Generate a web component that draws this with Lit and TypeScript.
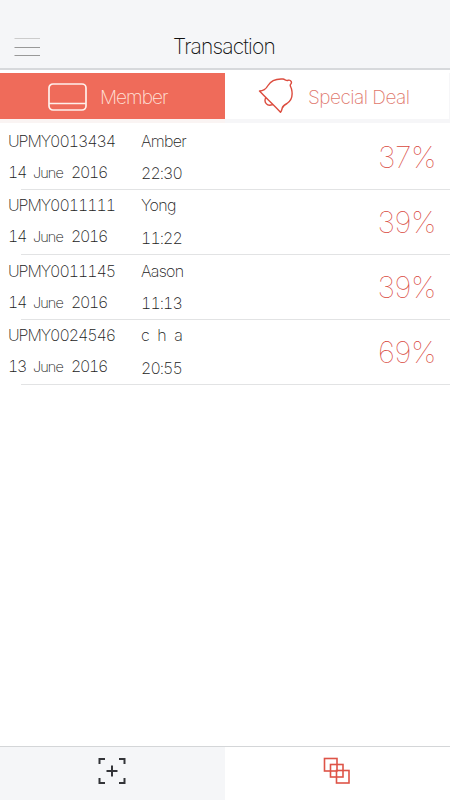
import { LitElement, html, css } from "lit";
import { customElement } from "lit/decorators.js";
import { classMap } from "lit/directives/class-map.js";

interface Deal { id: string; name: string; day: string; time: string; pct: string; spaced?: boolean; }

const deals: Deal[] = [
  { id: "UPMY0013434", name: "Amber", day: "14", time: "22:30", pct: "37%" },
  { id: "UPMY0011111", name: "Yong", day: "14", time: "11:22", pct: "39%" },
  { id: "UPMY0011145", name: "Aason", day: "14", time: "11:13", pct: "39%" },
  { id: "UPMY0024546", name: "cha", day: "13", time: "20:55", pct: "69%", spaced: true },
];

@customElement("app-root")
export class AppRoot extends LitElement {
  static styles = css`
    :host { display: flex; flex-direction: column; width: 450px; height: 800px; background: #fff; overflow: hidden;
      font-family: Inter, "Liberation Sans", sans-serif; font-weight: 200; color: #222; box-sizing: border-box; }
    * { box-sizing: border-box; }
    svg { display: block; fill: none; flex: none; }
    header { height: 70px; flex: none; background: #f5f6f8; border-bottom: 2px solid #d7d9dc; display: grid;
      grid-template-columns: 1fr auto 1fr; padding: 25px 16px 0 14px; align-items: center; }
    h1 { margin: 0; padding-top: 1px; font-size: 21px; line-height: 24px; font-weight: 200; letter-spacing: -0.85px; color: #111; }
    .tabs { display: grid; grid-template-columns: 1fr 1fr; height: 49px; flex: none; padding-top: 3px; }
    .tab { display: flex; align-items: center; font-size: 19px; padding-top: 1px; color: #e0776c; letter-spacing: -0.52px; white-space: nowrap; }
    .tab.on { background: #ef6b5a; color: #ffe3dc; padding-left: 48px; gap: 13px; letter-spacing: -0.95px; }
    .tab span { padding-top: 1px; }
    .tab.deal { padding-left: 33px; gap: 14px; border-right: 1px solid #f6f6f8; }
    .deal svg { margin-top: -3px; }
    .strip { height: 6px; flex: none; display: grid; grid-template-columns: 1fr 1fr; padding-bottom: 2px; }
    .strip span { background: #f6f6f8; }
    .strip span:first-child { background: #faf4f3; }
    .list { flex: 1; }
    .row { height: 65px; position: relative; display: grid; grid-template-columns: 133px 1fr auto; padding: 0 14px 0 8px; }
    .row::after { content: ""; position: absolute; left: 21px; right: 0; bottom: 0; height: 1px; background: #e2e3e4; }
    .col { display: flex; flex-direction: column; padding-top: 6px; gap: 11px; font-size: 16px; line-height: 20px; white-space: nowrap; font-variant-numeric: tabular-nums; }
    .row:nth-child(even) .col { padding-top: 5px; }
    .row:nth-child(even) .time { padding-top: 2px; }
    .id { letter-spacing: -1.05px; }
    .date { display: grid; grid-template-columns: 25px 38px auto; align-items: baseline; letter-spacing: -1.3px; }
    .month { font-size: 14.5px; letter-spacing: -0.9px; }
    .name { letter-spacing: -0.7px; }
    .name.spaced { letter-spacing: 7.5px; }
    .time { letter-spacing: -0.95px; padding-top: 1px; }
    .pct { font-size: 30px; font-weight: 100; line-height: 36px; padding-top: 14px; letter-spacing: -0.4px; color: #d8483c; }
    footer { height: 54px; flex: none; border-top: 1px solid #d4d6d8; display: grid; grid-template-columns: 1fr 1fr; }
    .nav { display: flex; justify-content: center; padding: 10px 1px 0 0; }
    .nav.scan { background: #f5f6f8; }
  `;

  render() {
    return html`
      <header>
        <svg width="26" height="20" viewBox="0 0 26 20"><path d="M.5 1.500h25.500" stroke="#ccc"/><path d="M.5 10.500h25.500M.5 18.500h25.500" stroke="#999"/></svg>
        <h1>Transaction</h1><span></span>
      </header>
      <nav class="tabs">
        <div class="tab on">
          <svg width="39" height="28" viewBox="0 0 39 28" stroke="#fff0eb" stroke-width="1.7"><rect x="1" y="1" width="37" height="26" rx="4"/><path d="M1 20.500h37"/></svg>
          <span>Member</span>
        </div>
        <div class="tab deal">
          <svg width="36" height="36" viewBox="0 0 36 36" stroke="#dc4c3e" stroke-width="1.4" stroke-linejoin="round" stroke-linecap="round">
            <path d="M1.500 14C6 14 8 12 10 8.500C13 3.500 18 1.500 25 2C27 2.200 28 4 30 3.300C33 2.500 34.500 5.500 32.500 7.500C31.500 8.500 33 10 33.500 12C35 18 34 23 29 26.500C24 29 24.500 30 24 32Q23.500 34 22.500 35.200C15 27 8 21 1.500 14ZM7.800 20.500C5.500 25 9 30 14.500 27.500"/>
          </svg>
          <span>Special Deal</span>
        </div>
      </nav>
      <div class="strip"><span></span><span></span></div>
      <main class="list">
        ${deals.map((d) => html`
          <section class="row">
            <div class="col">
              <span class="id">${d.id}</span>
              <span class="date"><span>${d.day}</span><span class="month">June</span><span>2016</span></span>
            </div>
            <div class="col">
              <span class=${classMap({ name: true, spaced: !!d.spaced })}>${d.name}</span>
              <span class="time">${d.time}</span>
            </div>
            <span class="pct">${d.pct}</span>
          </section>`)}
      </main>
      <footer>
        <div class="nav scan">
          <svg width="28" height="28" viewBox="0 0 28 28" stroke="#333438" stroke-width="2"><path d="M1.500 7V2H7M21 2h5.500v5M26.500 21v5H21M7 26H1.500v-5M14 8.500v11M8.500 14h11"/></svg>
        </div>
        <div class="nav">
          <svg width="28" height="28" viewBox="0 0 28 28" stroke="#de5448" stroke-width="1.600"><rect x="1.500" y="1.500" width="12.500" height="12.500"/><rect x="7.500" y="7.500" width="12.500" height="12.500"/><rect x="13.500" y="13.500" width="12.500" height="12.500"/></svg>
        </div>
      </footer>`;
  }
}
